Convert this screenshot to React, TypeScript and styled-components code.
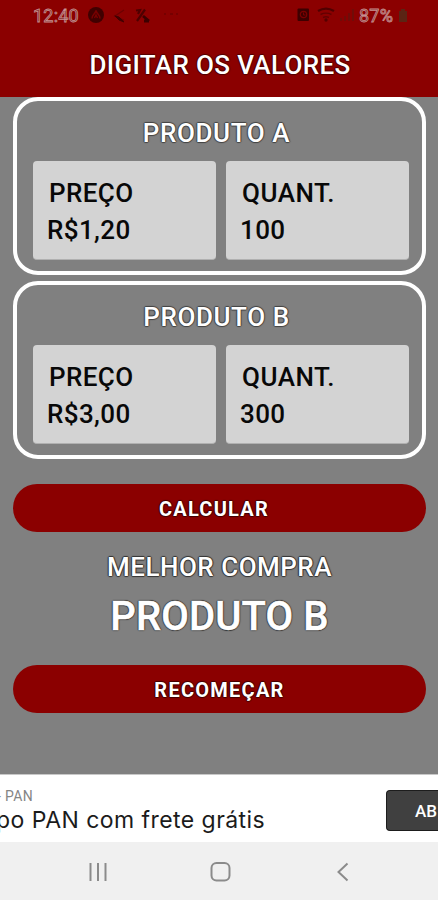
import React from "react";
import styled, { createGlobalStyle } from "styled-components";

const Global = createGlobalStyle`
  *, *::before, *::after { box-sizing: border-box; }
  body { margin: 0; background: #808080; }
  button { border: 0; padding: 0; margin: 0; }
`;

const outline = (c: string) =>
  `-1px 0 1px ${c}, 1px 0 1px ${c}, 0 -1px 1px ${c}, 0 1px 1px ${c}`;

const Screen = styled.div`
  display: flex;
  flex-direction: column;
  width: 438px;
  height: 900px;
  overflow: hidden;
  background: #808080;
  color: #fff;
  font-family: Roboto, sans-serif;
  font-weight: 500;
`;

const Header = styled.header`
  height: 97px;
  flex: none;
  background: #8b0000;
`;

const StatusBar = styled.div`
  display: flex;
  justify-content: space-between;
  align-items: center;
  height: 32px;
  padding: 0 30px 0 33px;
`;

const StatusGroup = styled.div`
  display: flex;
  align-items: center;
  height: 20px;
`;

const StatusText = styled.span<{ $width: number }>`
  width: ${(p) => p.$width}px;
  font-size: 18px;
  font-weight: 400;
  line-height: 20px;
  white-space: nowrap;
  letter-spacing: 0.2px;
  color: #7c2525;
  -webkit-text-stroke: 0.8px #c79090;
`;

const Title = styled.h1`
  margin: 17px 0 0;
  padding-left: 2px;
  font-size: 26px;
  line-height: 33px;
  font-weight: 500;
  letter-spacing: 0.35px;
  text-align: center;
  text-shadow: ${outline("#500000")};
`;

const Content = styled.main`
  display: flex;
  flex-direction: column;
  flex: 1;
  padding: 0 12px 0 13px;
`;

const Card = styled.section`
  height: 178px;
  margin-bottom: 6px;
  padding: 17px 13px 0 16px;
  border: 4px solid #fff;
  border-radius: 25px;
`;

const CardTitle = styled.h2`
  margin: 0 0 13px;
  padding-right: 9px;
  font-size: 26px;
  line-height: 30px;
  font-weight: 500;
  letter-spacing: 0.6px;
  text-align: center;
  text-shadow: ${outline("#444")};
`;

const Fields = styled.div`
  display: grid;
  grid-template-columns: 183px 183px;
  gap: 10px;
`;

const Field = styled.div`
  height: 99px;
  padding: 14px 13px 0;
  border-radius: 4px;
  border-bottom: 1px solid #b0b0b0;
  background: #d3d3d3;
  color: #080808;
`;

const FieldLabel = styled.div<{ $spacing: number }>`
  padding-left: 3px;
  font-size: 26px;
  line-height: 37px;
  letter-spacing: ${(p) => p.$spacing}px;
`;

const FieldValue = styled.div`
  padding-left: 1px;
  font-size: 26px;
  line-height: 37px;
  letter-spacing: 0.4px;
`;

const Pill = styled.button<{ $shift?: number }>`
  flex: none;
  height: 48px;
  padding: 2px ${(p) => p.$shift ?? 0}px 0 0;
  border-radius: 24px;
  background: #8b0000;
  color: #fff;
  font: 700 20px/46px Roboto, sans-serif;
  letter-spacing: 1.25px;
  text-shadow: ${outline("#400000")};
`;

const Spacer = styled.div`
  flex: none;
  height: 19px;
`;

const Result = styled.section`
  height: 133px;
  padding-top: 19px;
  text-align: center;
  text-shadow: ${outline("#333")};
`;

const ResultLabel = styled.div`
  font-size: 26px;
  line-height: 32px;
  letter-spacing: 0.5px;
`;

const ResultName = styled.div`
  margin-top: 10px;
  font-size: 40px;
  line-height: 48px;
  letter-spacing: 0.15px;
  -webkit-text-stroke: 0.5px #fff;
`;

const Ad = styled.aside`
  display: flex;
  justify-content: space-between;
  flex: none;
  height: 68px;
  padding-top: 13px;
  border-top: 1px solid #c8c8c8;
  background: #fff;
`;

const AdCopy = styled.div`
  display: flex;
  flex-direction: column;
  white-space: nowrap;
`;

const AdBrand = styled.span`
  margin-left: -3px;
  font: 400 14px/16px Roboto, sans-serif;
  letter-spacing: 0.35px;
  color: #858585;
`;

const AdHeadline = styled.span`
  margin-left: -4px;
  font: 400 23px/32px Inter, sans-serif;
  letter-spacing: 0.45px;
  color: #1b1b1b;
`;

const AdButton = styled.button`
  flex: none;
  width: 52px;
  height: 41px;
  margin-top: 2px;
  padding-left: 28px;
  overflow: hidden;
  border: 1px solid #1d1d1d;
  border-right: 0;
  border-radius: 4px 0 0 4px;
  background: #404040;
  color: #fff;
  font: 500 17px/38px Roboto, sans-serif;
  text-align: left;
`;

const NavBar = styled.nav`
  display: grid;
  grid-template-columns: 24px 24px 24px;
  justify-content: center;
  align-items: center;
  column-gap: 98px;
  flex: none;
  height: 58px;
  padding: 2px 0 0 3px;
  background: #f0f0f0;
`;

const Icon = styled.svg`
  display: block;
  fill: none;
  overflow: visible;
`;

const ProductCard = ({ name, price, amount }: { name: string; price: string; amount: string }) => (
  <Card>
    <CardTitle>{name}</CardTitle>
    <Fields>
      <Field>
        <FieldLabel $spacing={0.4}>PREÇO</FieldLabel>
        <FieldValue>{price}</FieldValue>
      </Field>
      <Field>
        <FieldLabel $spacing={0.5}>QUANT.</FieldLabel>
        <FieldValue>{amount}</FieldValue>
      </Field>
    </Fields>
  </Card>
);

export default function App() {
  return (
    <Screen>
      <Global />
      <Header>
        <StatusBar>
          <StatusGroup>
            <StatusText $width={54}>12:40</StatusText>
            <Icon width="96" height="20" viewBox="0 0 96 20">
              <circle cx="9" cy="9" r="8" fill="#400000" />
              <path d="M5 12.5c0-4 3-4 4-8 1 4 4 4 4 8M7.5 12l1.5-3 1.5 3" stroke="#780000" strokeWidth="1.5" />
              <path d="m37 4-9 6M27 9.5l10 5" stroke="#6d0000" strokeWidth="1.4" />
              <path d="m28 10 4 1 5 5-5-2z" fill="#430000" stroke="#430000" strokeWidth="1" />
              <path d="m49 4.5 4-.5-2 4M58 3.5 50 15" stroke="#4e0000" strokeWidth="2.2" />
              <path d="m56 10 6 5M57 15h5" stroke="#3c0000" strokeWidth="2.8" />
              <path d="M77 8h2M83 8h3M89 8h2" stroke="#700000" strokeWidth="1.5" />
            </Icon>
          </StatusGroup>
          <StatusGroup>
            <Icon width="62" height="20" viewBox="0 0 62 20">
              <rect x="0.5" y="2.5" width="11.5" height="12.5" rx="1" fill="#3d0000" />
              <circle cx="6.5" cy="8.5" r="3.2" stroke="#7b0000" strokeWidth="1.2" />
              <path d="M6.5 6.5V9h2" stroke="#7b0000" />
              <path d="M21 5c5-3 11-3 16 0" stroke="#500000" strokeWidth="2.4" />
              <path d="M23.5 8.5c4-2 7-2 11 0M26 11.5c2-1 4-1 6 0" stroke="#620000" strokeWidth="1.4" />
              <circle cx="29" cy="14" r="1.7" fill="#560000" />
              <path d="M44 15v-3M48 15v-5M52 15V7M56 15V3" stroke="#700c08" strokeWidth="2" />
            </Icon>
            <StatusText $width={39}>87%</StatusText>
            <Icon width="10" height="20" viewBox="0 0 10 20">
              <path d="M3 3h4v2h2v11H1V5h2z" fill="#5b2414" />
            </Icon>
          </StatusGroup>
        </StatusBar>
        <Title>DIGITAR OS VALORES</Title>
      </Header>
      <Content>
        <ProductCard name="PRODUTO A" price="R$1,20" amount="100" />
        <ProductCard name="PRODUTO B" price="R$3,00" amount="300" />
        <Spacer />
        <Pill $shift={11}>CALCULAR</Pill>
        <Result>
          <ResultLabel>MELHOR COMPRA</ResultLabel>
          <ResultName>PRODUTO B</ResultName>
        </Result>
        <Pill>RECOMEÇAR</Pill>
      </Content>
      <Ad>
        <AdCopy>
          <AdBrand>- PAN</AdBrand>
          <AdHeadline>po PAN com frete grátis</AdHeadline>
        </AdCopy>
        <AdButton>AB</AdButton>
      </Ad>
      <NavBar>
        <Icon width="24" height="24" viewBox="0 0 24 24" stroke="#8b8b8b" strokeWidth="2">
          <path d="M3.5 3v18M11 3v18M18.5 3v18" />
        </Icon>
        <Icon width="24" height="24" viewBox="0 0 24 24" stroke="#8b8b8b" strokeWidth="2">
          <rect x="2.5" y="3" width="18" height="17.5" rx="5" />
        </Icon>
        <Icon width="24" height="24" viewBox="0 0 24 24" stroke="#8b8b8b" strokeWidth="2">
          <path d="m16.5 3.5-9 8.5 9 8.5" />
        </Icon>
      </NavBar>
    </Screen>
  );
}
